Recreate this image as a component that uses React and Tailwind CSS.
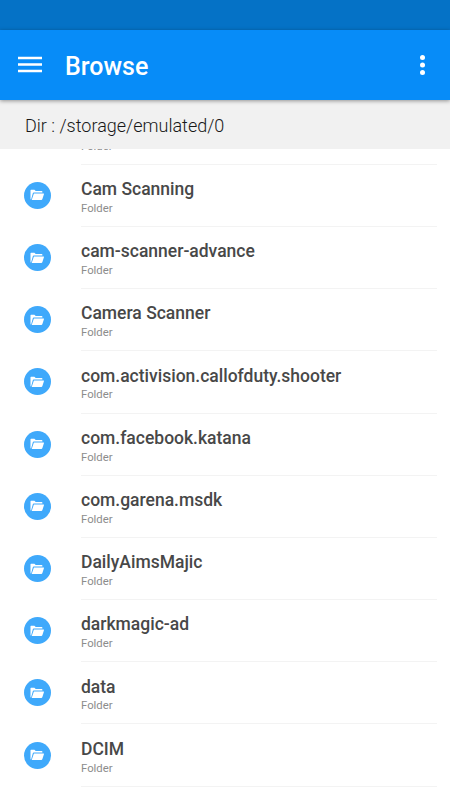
const folders = [
  'Bluetooth',
  'Cam Scanning',
  'cam-scanner-advance',
  'Camera Scanner',
  'com.activision.callofduty.shooter',
  'com.facebook.katana',
  'com.garena.msdk',
  'DailyAimsMajic',
  'darkmagic-ad',
  'data',
  'DCIM',
];

function FolderBadge() {
  return (
    <div className="flex size-[27px] shrink-0 items-center justify-center rounded-full bg-[#3fa9fb]">
      <svg width="15" height="12" viewBox="0 0 15 12" fill="white">
        <path d="M.5 10.2V1.3Q.5.7 1.1.7h3.3l1.3 1.4h6q.7 0 .7.7v.7H3.7q-.6 0-.8.6L1.1 10.4z" />
        <path d="M3.9 4.4h9.7q.6 0 .4.6l-1.6 5.1q-.3.9-1.1.9H1.7z" />
      </svg>
    </div>
  );
}

function FolderRow({ name }) {
  return (
    <div className="flex h-[62.2px] shrink-0 pl-6">
      <div className="flex w-[57px] shrink-0 items-center pb-px">
        <FolderBadge />
      </div>
      <div className="mr-[13px] flex-1 border-b border-[#f3f3f3] pt-[13.3px]">
        <div className="text-[17.5px] leading-[22px] font-medium whitespace-nowrap text-[#484848]">{name}</div>
        <div className="mt-[0.8px] text-[11.3px] leading-[15px] text-[#8c8c8c]">Folder</div>
      </div>
    </div>
  );
}

export default function App() {
  return (
    <div className="flex h-[800px] w-[450px] flex-col overflow-hidden bg-white font-['Roboto',sans-serif]">
      <div className="h-[30px] shrink-0 bg-[#0572c6]" />
      <header className="z-10 flex h-[70px] shrink-0 items-center bg-[#078cf8] pr-[25px] pl-[18px] text-white shadow-[0_1px_4px_rgba(0,0,0,0.4)]">
        <svg width="24" height="18" viewBox="0 0 24 18" fill="white">
          <path d="M0 .7h24v2.5H0zM0 7.3h24v2.5H0zM0 13.8h24v2.5H0z" />
        </svg>
        <h1 className="ml-[23px] flex-1 pt-[3px] text-[25px] leading-8 font-medium">Browse</h1>
        <svg width="5" height="21" viewBox="0 0 5 21" fill="white">
          <circle cx="2.5" cy="2.5" r="2.5" />
          <circle cx="2.5" cy="10" r="2.5" />
          <circle cx="2.5" cy="17.5" r="2.5" />
        </svg>
      </header>
      <div className="flex h-[49px] shrink-0 items-center bg-[#f1f1f1] pt-[1px] pl-[25px] text-[18px] leading-[27px] font-light text-[#181818]">
        Dir : /storage/emulated/0
      </div>
      <main className="min-h-0 flex-1 overflow-hidden">
        <div className="-mt-[46.4px] flex flex-col">
          {folders.map((name) => (
            <FolderRow key={name} name={name} />
          ))}
        </div>
      </main>
    </div>
  );
}
